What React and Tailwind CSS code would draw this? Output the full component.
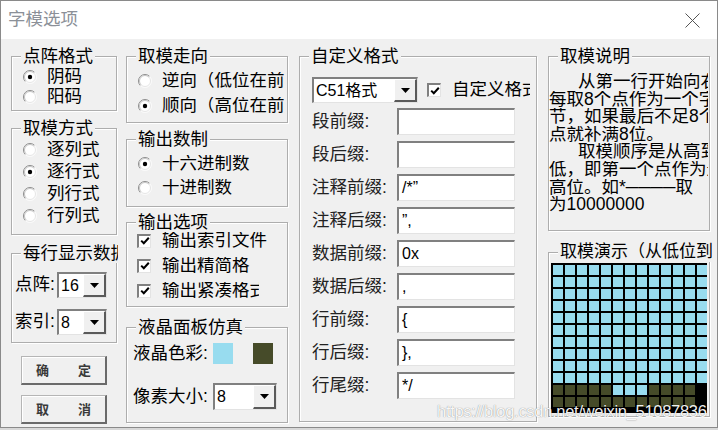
import React from "react";

const LIGHT = "#98dcef";
const DARK = "#464b29";

function Radio({ checked }) {
  return (
    <svg width="14" height="14" viewBox="0 0 14 14" className="shrink-0">
      <circle cx="7" cy="7" r="6.5" fill="#fff" />
      <path d="M2.4 11.6 A6.5 6.5 0 0 1 11.6 2.4" fill="none" stroke="#8c8c8c" strokeWidth="1" />
      <path d="M11.6 2.4 A6.5 6.5 0 0 1 2.4 11.6" fill="none" stroke="#fafafa" strokeWidth="1" />
      <path d="M3.1 10.9 A5.5 5.5 0 0 1 10.9 3.1" fill="none" stroke="#c4c4c4" strokeWidth="1" />
      <path d="M10.9 3.1 A5.5 5.5 0 0 1 3.1 10.9" fill="none" stroke="#e6e6e6" strokeWidth="1" />
      {checked && <circle cx="7" cy="7" r="2.2" fill="#000" />}
    </svg>
  );
}

function Check() {
  return (
    <span className="flex h-[14px] w-[14px] shrink-0 items-center justify-center border-t-2 border-l-2 border-r border-b border-[#808080] border-r-[#e3e3e3] border-b-[#e3e3e3] bg-white">
      <svg width="10" height="10" viewBox="0 0 10 10">
        <path d="M1.2 4.6 L3.8 7.2 L8.8 1.8" fill="none" stroke="#000" strokeWidth="2" />
      </svg>
    </span>
  );
}

function Select({ value, className }) {
  return (
    <div className={`flex shrink-0 border-t-2 border-l-2 border-r border-b border-[#808080] border-r-[#e3e3e3] border-b-[#e3e3e3] bg-white ${className}`}>
      <div className="flex flex-1 items-center overflow-hidden whitespace-nowrap pl-[2px] text-[16px] leading-none">
        {value}
      </div>
      <div className="flex w-[23px] items-center justify-center border-t border-l border-r-2 border-b-2 border-white border-r-[#5a5a5a] border-b-[#5a5a5a] bg-[#f0f0f0]">
        <svg width="9" height="5" viewBox="0 0 9 5">
          <path d="M0 0 H9 L4.5 5 Z" fill="#000" />
        </svg>
      </div>
    </div>
  );
}

function GroupBox({ title, className, titleClass, children }) {
  return (
    <div
      className={`relative shrink-0 border border-[#adadad] shadow-[inset_1px_1px_0_#ffffff,1px_1px_0_#ffffff] ${className}`}
    >
      <div
        className={`absolute left-[9px] top-[-11px] overflow-hidden whitespace-nowrap bg-[#f0f0f0] px-[2px] text-[17.5px] leading-[20px] ${titleClass || ""}`}
      >
        {title}
      </div>
      <div className="h-full w-full overflow-hidden">{children}</div>
    </div>
  );
}

function RadioRow({ checked, label, h, labelClass }) {
  return (
    <div className={`flex items-center ${h}`}>
      <Radio checked={checked} />
      <span className={`ml-[10px] overflow-hidden whitespace-nowrap text-[17.5px] leading-none ${labelClass || ""}`}>
        {label}
      </span>
    </div>
  );
}

function CheckRow({ label, labelClass }) {
  return (
    <div className="flex h-[25px] items-center">
      <Check />
      <span className={`ml-[11px] overflow-hidden whitespace-nowrap text-[17.5px] leading-none ${labelClass || ""}`}>
        {label}
      </span>
    </div>
  );
}

function Btn({ a, b, className }) {
  return (
    <div
      className={`flex h-[29px] w-[86px] items-center justify-between border-t border-l border-r-2 border-b-2 border-[#b5b5b5] border-r-[#6a6a6a] border-b-[#6a6a6a] bg-[#f0f0f0] px-[14px] text-[13px] font-bold leading-none text-[#3a3a3a] shadow-[inset_1px_1px_0_#ffffff] ${className}`}
    >
      <span>{a}</span>
      <span>{b}</span>
    </div>
  );
}

function Field({ label, value }) {
  return (
    <div className="flex h-[27px] items-center">
      <span className="w-[85px] whitespace-nowrap text-[17.5px] leading-none text-[#222]">{label}</span>
      <div className="flex h-[27px] w-[118px] items-center border-t-2 border-l-2 border-r border-b border-[#808080] border-r-[#e3e3e3] border-b-[#e3e3e3] bg-white pl-[3px] text-[16px] leading-none">
        {value}
      </div>
    </div>
  );
}

const gridRows = [];
for (let r = 0; r < 12; r++) {
  const row = [];
  for (let c = 0; c < 13; c++) {
    if (r < 10) row.push(LIGHT);
    else if (r === 10) row.push(c === 12 ? null : c >= 5 && c <= 7 ? LIGHT : DARK);
    else row.push(c === 12 ? null : DARK);
  }
  gridRows.push(row);
}

const descLines = [
  { t: "从第一行开始向右每", indent: true },
  { t: "每取8个点作为一个字" },
  { t: "节，如果最后不足8个" },
  { t: "点就补满8位。" },
  { t: "取模顺序是从高到低", indent: true },
  { t: "低，即第一个点作为最" },
  { t: "高位。如*────取" },
  { t: "为10000000" },
];

export default function App() {
  return (
    <div className="relative h-[430px] w-[718px] overflow-hidden bg-[#d8d8d8] font-['Liberation_Sans','Noto_Sans_CJK_SC',sans-serif] text-black">
      <div className="flex h-[428px] flex-col border border-[#8a8a8a] bg-[#f0f0f0]">
        {/* title bar */}
        <div className="flex h-[38px] shrink-0 items-center justify-between bg-white pl-[7px] pr-[17px]">
          <span className="text-[17.5px] leading-none text-[#8b9098]">字模选项</span>
          <svg width="15" height="15" viewBox="0 0 15 15">
            <path d="M0.5 0.5 L14.5 14.5 M14.5 0.5 L0.5 14.5" stroke="#555" strokeWidth="1" fill="none" />
          </svg>
        </div>

        {/* body */}
        <div className="flex flex-1 pl-[10px] pt-[17px]">
          {/* column 1 */}
          <div className="flex w-[106px] shrink-0 flex-col">
            <GroupBox title="点阵格式" className="h-[55px]">
              <div className="flex flex-col pl-[11px] pt-[10px]">
                <RadioRow checked label="阴码" h="h-[20px]" />
                <RadioRow label="阳码" h="h-[20px]" />
              </div>
            </GroupBox>
            <GroupBox title="取模方式" className="mt-[17px] h-[107px]">
              <div className="flex flex-col pl-[11px] pt-[10px]">
                <RadioRow label="逐列式" h="h-[22px]" />
                <RadioRow checked label="逐行式" h="h-[22px]" />
                <RadioRow label="列行式" h="h-[22px]" />
                <RadioRow label="行列式" h="h-[22px]" />
              </div>
            </GroupBox>
            <GroupBox title="每行显示数据" className="mt-[18px] h-[90px]" titleClass="max-w-[97px]">
              <div className="flex flex-col gap-[11px] pl-[3px] pt-[18px]">
                <div className="flex h-[26px] items-center">
                  <span className="w-[42px] whitespace-nowrap text-[17.5px] leading-none">点阵:</span>
                  <Select value="16" className="h-[26px] w-[50px]" />
                </div>
                <div className="flex h-[26px] items-center">
                  <span className="w-[42px] whitespace-nowrap text-[17.5px] leading-none">索引:</span>
                  <Select value="8" className="h-[26px] w-[50px]" />
                </div>
              </div>
            </GroupBox>
            <Btn a="确" b="定" className="ml-[10px] mt-[13px]" />
            <Btn a="取" b="消" className="ml-[10px] mt-[10px]" />
          </div>

          {/* column 2 */}
          <div className="ml-[9px] flex w-[162px] shrink-0 flex-col">
            <GroupBox title="取模走向" className="h-[67px]">
              <div className="flex flex-col pl-[11px] pt-[11px]">
                <RadioRow label="逆向（低位在前）" h="h-[25px]" labelClass="w-[123px]" />
                <RadioRow checked label="顺向（高位在前）" h="h-[25px]" labelClass="w-[123px]" />
              </div>
            </GroupBox>
            <GroupBox title="输出数制" className="mt-[16px] h-[68px]">
              <div className="flex flex-col pl-[11px] pt-[12px]">
                <RadioRow checked label="十六进制数" h="h-[24px]" />
                <RadioRow label="十进制数" h="h-[24px]" />
              </div>
            </GroupBox>
            <GroupBox title="输出选项" className="mt-[15px] h-[85px]">
              <div className="flex flex-col pl-[10px] pt-[5px]">
                <CheckRow label="输出索引文件" />
                <CheckRow label="输出精简格式" labelClass="w-[88px]" />
                <CheckRow label="输出紧凑格式" labelClass="w-[97px]" />
              </div>
            </GroupBox>
            <GroupBox title="液晶面板仿真" className="mt-[20px] h-[96px]">
              <div className="flex flex-col pl-[6px] pt-[15px]">
                <div className="flex h-[21px] items-center">
                  <span className="w-[80px] whitespace-nowrap text-[17.5px] leading-none">液晶色彩:</span>
                  <div className="h-[21px] w-[20px] bg-[#98dcef]" />
                  <div className="ml-[20px] h-[21px] w-[20px] bg-[#464b29]" />
                </div>
                <div className="mt-[19px] flex h-[27px] items-center">
                  <span className="w-[80px] whitespace-nowrap text-[17.5px] leading-none">像素大小:</span>
                  <Select value="8" className="h-[27px] w-[64px]" />
                </div>
              </div>
            </GroupBox>
          </div>

          {/* column 3 */}
          <div className="ml-[11px] flex w-[238px] shrink-0 flex-col">
            <GroupBox title="自定义格式" className="h-[366px]">
              <div className="flex flex-col pl-[12px] pt-[20px]">
                <div className="flex h-[26px] items-center">
                  <Select value="C51格式" className="h-[26px] w-[106px]" />
                  <span className="ml-[9px]">
                    <Check />
                  </span>
                  <span className="ml-[11px] w-[78px] overflow-hidden whitespace-nowrap text-[17.5px] leading-none">
                    自定义格式
                  </span>
                </div>
                <div className="mt-[5px] flex flex-col gap-[6px]">
                  <Field label="段前缀:" value="" />
                  <Field label="段后缀:" value="" />
                  <Field label="注释前缀:" value={"/*\u201d"} />
                  <Field label="注释后缀:" value={"\u201d,"} />
                  <Field label="数据前缀:" value="0x" />
                  <Field label="数据后缀:" value="," />
                  <Field label="行前缀:" value="{" />
                  <Field label="行后缀:" value="}," />
                  <Field label="行尾缀:" value="*/" />
                </div>
              </div>
            </GroupBox>
          </div>

          {/* column 4 */}
          <div className="ml-[11px] flex w-[162px] shrink-0 flex-col">
            <GroupBox title="取模说明" className="h-[175px]">
              <div className="flex flex-col pr-[1px] pt-[16px] text-[17.5px] leading-[17.6px]">
                {descLines.map((l, i) => (
                  <div key={i} className={`overflow-hidden whitespace-nowrap ${l.indent ? "pl-[29px]" : ""}`}>
                    {l.t}
                  </div>
                ))}
              </div>
            </GroupBox>
            <GroupBox title="取模演示（从低位到高位）" className="mt-[21px] h-[165px]" titleClass="max-w-[154px] text-[17px]">
              <div className="pl-[2px] pt-[10px]">
                <div className="h-[150px] w-[156px] overflow-hidden bg-black">
                  <div className="flex w-[200px] flex-col gap-[2px] p-[2px]">
                    {gridRows.map((row, r) => (
                      <div key={r} className="flex gap-[2px]">
                        {row.map((c, i) =>
                          c ? (
                            <div key={i} className="h-[10px] w-[10px] shrink-0" style={{ backgroundColor: c }} />
                          ) : (
                            <div key={i} className="h-[10px] w-[10px] shrink-0" />
                          )
                        )}
                      </div>
                    ))}
                  </div>
                </div>
              </div>
            </GroupBox>
          </div>
        </div>
      </div>

      {/* watermark */}
      <div className="absolute left-[437px] top-[401px] whitespace-nowrap text-[16.5px] leading-[20px] tracking-[-0.3px] text-[rgba(255,255,255,0.95)] [text-shadow:0_0_1px_rgba(0,0,0,0.5)]">
        https://blog.csdn.net/weixin_51087836
      </div>
    </div>
  );
}
